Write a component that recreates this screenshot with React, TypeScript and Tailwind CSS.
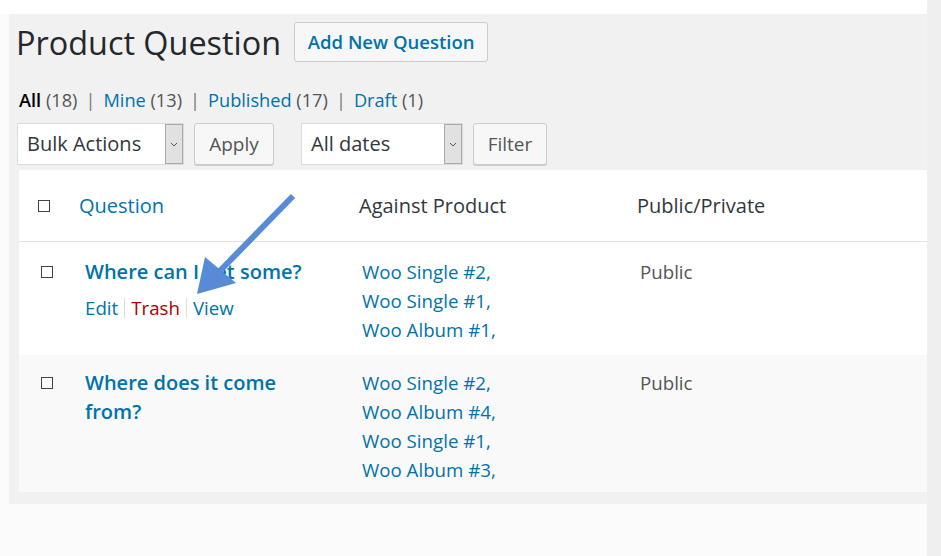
import React from 'react';

const font = { fontFamily: '"Open Sans", "Noto Sans", sans-serif' };

function Checkbox() {
  return <span className="inline-block w-[12px] h-[12px] border border-[#444] bg-white" />;
}

function Select({ label, width }: { label: string; width: string }) {
  return (
    <div className={`flex h-[42px] border border-[#dcdcdc] bg-white ${width}`}>
      <span className="flex-1 flex items-center pl-[9px] text-[20px] text-[#32373c]">{label}</span>
      <span className="w-[18px] flex items-center justify-center bg-[#e1e1e1] border border-[#a9a9a9]">
        <svg width="8" height="5" viewBox="0 0 8 5" fill="none">
          <path d="M1 1l3 3 3-3" stroke="#555" strokeWidth="1" />
        </svg>
      </span>
    </div>
  );
}

function Button({ label, width }: { label: string; width: string }) {
  return (
    <button className={`h-[42px] rounded-[3px] border border-[#cccccc] bg-[#f7f7f7] text-[19px] text-[#555] shadow-[0_1px_0_#cccccc] ${width}`}>
      {label}
    </button>
  );
}

const products1 = ['Woo Single #2,', 'Woo Single #1,', 'Woo Album #1,'];
const products2 = ['Woo Single #2,', 'Woo Album #4,', 'Woo Single #1,', 'Woo Album #3,'];

export default function App() {
  return (
    <div style={font} className="relative w-[941px] h-[556px] overflow-hidden bg-[#fbfbfb] flex">
      <div className="w-[927px] flex flex-col">
        <div className="h-[14px] bg-white" />
        <div className="ml-[9px] h-[490px] bg-[#f1f1f1] flex flex-col">
          <div className="flex items-center pt-[8px] pl-[7px] gap-[13px]">
            <h1 className="text-[32.4px] leading-[40px] text-[#23282d]">Product Question</h1>
            <button className="h-[40px] w-[194px] rounded-[3px] border border-[#cccccc] bg-[#f7f7f7] text-[18.5px] font-semibold text-[#0073aa]">
              Add New Question
            </button>
          </div>

          <div className="mt-[24px] pl-[10px] text-[18.2px] leading-[29px] text-[#555] flex gap-[8px]">
            <span><b className="text-black font-semibold">All</b> (18)</span>
            <span className="text-[#777]">|</span>
            <span><span className="text-[#0073aa]">Mine</span> (13)</span>
            <span className="text-[#777]">|</span>
            <span><span className="text-[#0073aa]">Published</span> (17)</span>
            <span className="text-[#777]">|</span>
            <span><span className="text-[#0073aa]">Draft</span> (1)</span>
          </div>

          <div className="mt-[8px] pl-[8px] flex">
            <Select label="Bulk Actions" width="w-[167px]" />
            <Button label="Apply" width="w-[80px] ml-[10px]" />
            <Select label="All dates" width="w-[162px] ml-[27px]" />
            <Button label="Filter" width="w-[74px] ml-[10px]" />
          </div>

          <div className="mt-[5px] ml-[10px] flex flex-col">
            <div className="h-[72px] bg-white border-b border-[#e1e1e1] flex items-center text-[20px] text-[#32373c]">
              <div className="w-[57px] pl-[19px] flex"><Checkbox /></div>
              <div className="w-[280px] pl-[3px] text-[#0073aa]">Question</div>
              <div className="w-[278px] pl-[3px]">Against Product</div>
              <div className="pl-[3px]">Public/Private</div>
            </div>

            <div className="h-[113px] bg-white flex items-start pt-[15px] text-[18.7px] leading-[29px]">
              <div className="w-[57px] pl-[22px] pt-[9px] flex"><Checkbox /></div>
              <div className="w-[280px] pl-[9px]">
                <div className="font-semibold text-[20px] text-[#0073aa]">Where can I get some?</div>
                <div className="mt-[7px] flex items-center">
                  <span className="text-[#0073aa]">Edit</span>
                  <span className="mx-[6px] w-px h-[20px] bg-[#ddd]" />
                  <span className="text-[#a00]">Trash</span>
                  <span className="mx-[6px] w-px h-[20px] bg-[#ddd]" />
                  <span className="text-[#0073aa]">View</span>
                </div>
              </div>
              <div className="w-[278px] pl-[6px] text-[#0073aa]">
                {products1.map((p) => <div key={p}>{p}</div>)}
              </div>
              <div className="pl-[6px] text-[#555]">Public</div>
            </div>

            <div className="h-[137px] bg-[#f9f9f9] flex items-start pt-[13px] text-[18.7px] leading-[29px]">
              <div className="w-[57px] pl-[22px] pt-[9px] flex"><Checkbox /></div>
              <div className="w-[280px] pl-[9px]">
                <div className="font-semibold text-[20px] text-[#0073aa] w-[205px]">Where does it come from?</div>
              </div>
              <div className="w-[278px] pl-[6px] text-[#0073aa]">
                {products2.map((p) => <div key={p}>{p}</div>)}
              </div>
              <div className="pl-[6px] text-[#555]">Public</div>
            </div>
          </div>
        </div>
      </div>
      <div className="w-[14px] bg-[#efefef]" />

      <svg className="absolute left-0 top-0 pointer-events-none" width="941" height="556">
        <line x1="293" y1="196" x2="214" y2="277" stroke="#588bd6" strokeWidth="6" />
        <polygon points="197,294 205,257 236,283" fill="#588bd6" />
      </svg>
    </div>
  );
}
